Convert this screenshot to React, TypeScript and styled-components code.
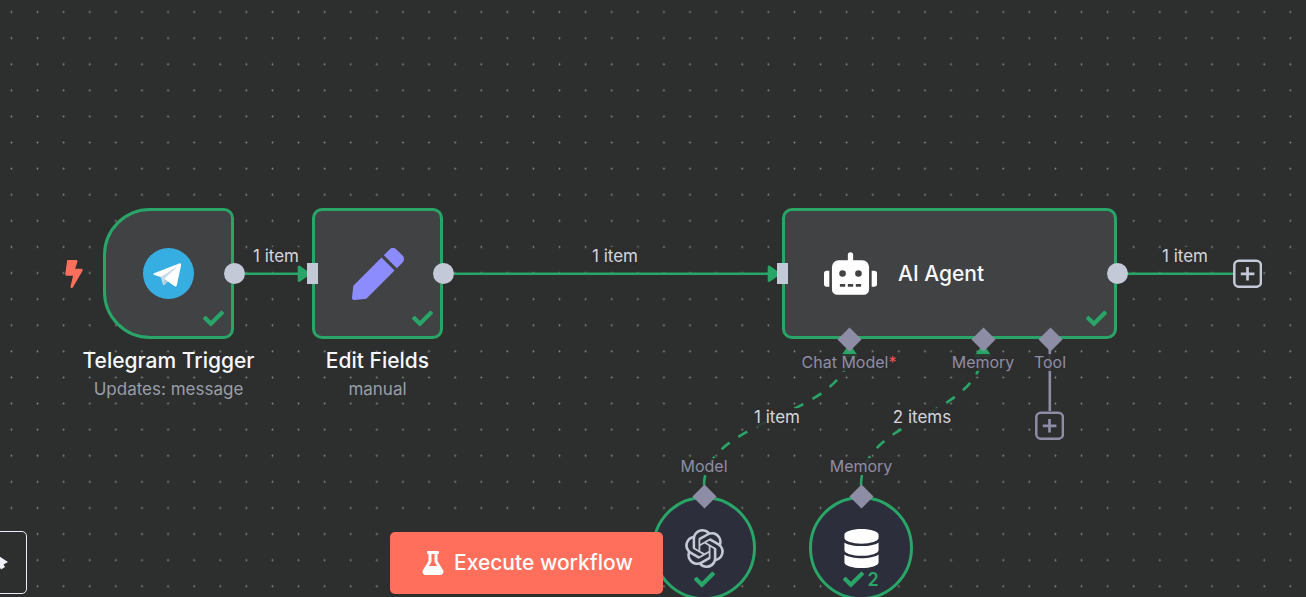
import React from "react";
import styled, { createGlobalStyle, css } from "styled-components";
import { FaBolt, FaCheck, FaDatabase, FaFlask, FaPen, FaRobot } from "react-icons/fa";
import { SiOpenai } from "react-icons/si";

const color = {
  canvas: "#2d2e2e",
  dot: "#8f9090",
  node: "#414244",
  subNode: "#2d2e3c",
  success: "#29a568",
  handle: "#c3c9d6",
  port: "#8d8da6",
  text: "#f7f8fb",
  textSoft: "#d3d6de",
  textDim: "#9a9ea8",
  primary: "#ff6f5c",
};

const GlobalStyle = createGlobalStyle`
  * { box-sizing: border-box; }
  body {
    margin: 0;
    background: ${color.canvas};
    font-family: Inter, "Liberation Sans", sans-serif;
  }
  button { font: inherit; }
`;

type Place = { $x: number; $y: number };

const at = css<Place>`
  position: absolute;
  left: ${(p) => p.$x}px;
  top: ${(p) => p.$y}px;
`;

const Canvas = styled.main`
  position: relative;
  height: 100vh;
  overflow: hidden;
`;

const Drawing = styled.svg`
  position: absolute;
  inset: 0;
  width: 100%;
  height: 100%;
`;

const Node = styled.article<Place & { $width: number }>`
  ${at}
  width: ${(p) => p.$width}px;
  display: flex;
  flex-direction: column;
  align-items: center;
`;

const Box = styled.div<{ $shape?: "trigger" | "circle" | "wide" }>`
  position: relative;
  width: 100%;
  height: ${(p) => (p.$shape === "circle" ? 104 : 131)}px;
  display: flex;
  align-items: center;
  justify-content: ${(p) => (p.$shape === "wide" ? "flex-start" : "center")};
  gap: 21px;
  padding: 0 ${(p) => (p.$shape === "wide" ? 39 : 0)}px;
  border: 3px solid ${color.success};
  border-radius: ${(p) =>
    p.$shape === "circle" ? "50%" : p.$shape === "trigger" ? "47px 10px 10px 47px" : "10px"};
  background: ${(p) => (p.$shape === "circle" ? color.subNode : color.node)};
`;

const Title = styled.h2`
  margin: 0;
  font-size: 21px;
  line-height: 26px;
  font-weight: 500;
  color: ${color.text};
  white-space: nowrap;
`;

const Caption = styled.div`
  margin-top: 9px;
  text-align: center;
  white-space: nowrap;
`;

const Subtitle = styled.p`
  margin: 4px 0 0;
  font-size: 17px;
  line-height: 22px;
  color: ${color.textDim};
`;

const Status = styled.div<{ $centered?: boolean }>`
  position: absolute;
  display: flex;
  align-items: center;
  gap: 3px;
  color: ${color.success};
  font-size: 18px;
  line-height: 20px;
  font-weight: 600;
  ${(p) =>
    p.$centered
      ? css`left: 0; right: 0; bottom: 7px; justify-content: center;`
      : css`right: 7px; bottom: 7px;`}
`;

const TriggerMark = styled.div`
  position: absolute;
  right: 100%;
  margin-right: 18px;
  display: flex;
  color: ${color.primary};
`;

const InputHandle = styled.span`
  position: absolute;
  left: -8px;
  width: 11px;
  height: 21px;
  background: ${color.handle};
`;

const OutputHandle = styled.span`
  position: absolute;
  right: -14px;
  width: 21px;
  height: 21px;
  border-radius: 50%;
  background: ${color.handle};
`;

const Port = styled.div<Place>`
  ${at}
  width: 0;
  display: flex;
  flex-direction: column;
  align-items: center;
`;

const Diamond = styled.span`
  width: 17px;
  height: 17px;
  margin: -8px 0;
  transform: rotate(45deg);
  background: ${color.port};
`;

const PortLabel = styled.span<{ $above?: boolean }>`
  ${(p) =>
    p.$above
      ? css`order: -1; margin: -38px 0 21px;`
      : css`margin-top: 14px;`}
  height: 17px;
  font-size: 16px;
  line-height: 17px;
  color: ${color.port};
  background: rgba(45, 46, 46, 0.88);
  white-space: nowrap;
`;

const Required = styled.span`
  color: #ff4f55;
`;

const EdgeLabel = styled.div<Place>`
  ${at}
  width: 0;
  display: flex;
  justify-content: center;
  font-size: 17px;
  line-height: 19px;
  color: ${color.textSoft};
  white-space: nowrap;

  span {
    background: rgba(45, 46, 46, 0.88);
  }
`;

const AddButton = styled.button<Place & { $tone: string }>`
  ${at}
  width: 29px;
  height: 29px;
  padding: 0;
  display: flex;
  align-items: center;
  justify-content: center;
  border: 0;
  background: ${color.canvas};
  color: ${(p) => p.$tone};
`;

const ExecuteButton = styled.button`
  position: absolute;
  left: 390px;
  bottom: 3px;
  display: flex;
  align-items: center;
  gap: 9px;
  height: 62px;
  padding: 0 30px 1px 31px;
  border: 0;
  border-radius: 5px;
  background: ${color.primary};
  color: #fff;
  font-size: 21px;
  font-weight: 500;
  white-space: nowrap;
`;

const PointerTool = styled.button`
  position: absolute;
  left: -36px;
  bottom: 3px;
  width: 63px;
  height: 63px;
  padding: 0 18px 0 0;
  display: flex;
  align-items: center;
  justify-content: flex-end;
  border: 1px solid #eceef8;
  border-radius: 5px;
  background: ${color.canvas};
`;

const TelegramLogo = () => (
  <svg width="51" height="51" viewBox="0 0 240 240" aria-hidden="true">
    <circle cx="120" cy="120" r="120" fill="#37aee2" />
    <path fill="#c8daea" d="M98 175c-3.888 0-3.227-1.468-4.568-5.17L82 132.207 170 80" />
    <path fill="#a9c9dd" d="M98 175c3 0 4.325-1.372 6-3l16-15.558-19.958-12.035" />
    <path
      fill="#fff"
      d="M100.04 144.41l48.36 35.729c5.519 3.045 9.501 1.468 10.876-5.123l19.685-92.763c2.015-8.08-3.08-11.746-8.36-9.349l-115.59 44.571c-7.89 3.165-7.843 7.567-1.438 9.528l29.663 9.259 68.673-43.325c3.242-1.966 6.218-.91 3.776 1.258"
    />
  </svg>
);

const PlusBox = () => (
  <svg width="29" height="29" viewBox="0 0 29 29" fill="none" stroke="currentColor" aria-hidden="true">
    <rect x="1.3" y="1.8" width="26.6" height="26" rx="4.5" strokeWidth="2.5" />
    <path d="M14.5 8v13.6M7.8 14.8h13.6" strokeWidth="2.7" />
  </svg>
);

const Arrow = ({ x, y, up }: { x: number; y: number; up?: boolean }) => (
  <path
    d="M-10 -7L0 0L-10 7Z"
    transform={`translate(${x} ${y})${up ? " rotate(-90)" : ""}`}
    fill={color.success}
    stroke={color.success}
    strokeWidth="2.6"
    strokeLinejoin="round"
  />
);

const Edges = () => (
  <Drawing aria-hidden="true">
    <defs>
      <pattern id="dots" x="-1.6" y="-1" width="26.1" height="26.1" patternUnits="userSpaceOnUse">
        <circle cx="13.05" cy="13.05" r="0.85" fill={color.dot} />
      </pattern>
    </defs>
    <rect width="100%" height="100%" fill="url(#dots)" />
    <g fill="none" stroke={color.success} strokeWidth="2.6">
      <path d="M234 273.7H300" />
      <path d="M443 273.7H770" />
      <path d="M1117 273.7H1233" />
      <path strokeDasharray="10.4 10.4" d="M704 485.5C704 417 849.5 417 849.5 349" />
      <path strokeDasharray="10.4 10.4" d="M861 485.5C861 417 983 417 983 349" />
    </g>
    <path d="M1049.8 339V411" stroke={color.port} strokeWidth="2.6" />
    <Arrow x={309} y={273.7} />
    <Arrow x={779} y={273.7} />
    <Arrow x={849.5} y={346} up />
    <Arrow x={983} y={346} up />
  </Drawing>
);

const Done = ({ count, centered }: { count?: number; centered?: boolean }) => (
  <Status $centered={centered}>
    <FaCheck size={21} />
    {count}
  </Status>
);

const EDGE_LABELS = [
  { x: 276, y: 247, text: "1 item" },
  { x: 615, y: 247, text: "1 item" },
  { x: 1185, y: 247, text: "1 item" },
  { x: 777, y: 408, text: "1 item" },
  { x: 922, y: 408, text: "2 items" },
];

export default function App() {
  return (
    <>
      <GlobalStyle />
      <Canvas>
        <Edges />

        <Node $x={103} $y={208} $width={131}>
          <Box $shape="trigger">
            <TriggerMark>
              <FaBolt size={28} />
            </TriggerMark>
            <TelegramLogo />
            <OutputHandle />
            <Done />
          </Box>
          <Caption>
            <Title>Telegram Trigger</Title>
            <Subtitle>Updates: message</Subtitle>
          </Caption>
        </Node>

        <Node $x={312} $y={208} $width={131}>
          <Box>
            <InputHandle />
            <FaPen size={52} color="#8c8cff" />
            <OutputHandle />
            <Done />
          </Box>
          <Caption>
            <Title>Edit Fields</Title>
            <Subtitle>manual</Subtitle>
          </Caption>
        </Node>

        <Node $x={782} $y={208} $width={335}>
          <Box $shape="wide">
            <InputHandle />
            <FaRobot size={53} color="#fff" />
            <Title>AI Agent</Title>
            <OutputHandle />
            <Done />
          </Box>
          <Port $x={67} $y={131}>
            <Diamond />
            <PortLabel>
              Chat Model<Required>*</Required>
            </PortLabel>
          </Port>
          <Port $x={201} $y={131}>
            <Diamond />
            <PortLabel>Memory</PortLabel>
          </Port>
          <Port $x={268} $y={131}>
            <Diamond />
            <PortLabel>Tool</PortLabel>
          </Port>
        </Node>

        <Node $x={652} $y={496} $width={104}>
          <Box $shape="circle">
            <SiOpenai size={39} color={color.handle} />
            <Done centered />
          </Box>
          <Port $x={52} $y={0}>
            <Diamond />
            <PortLabel $above>Model</PortLabel>
          </Port>
        </Node>

        <Node $x={809} $y={496} $width={104}>
          <Box $shape="circle">
            <FaDatabase size={39} color="#fff" />
            <Done centered count={2} />
          </Box>
          <Port $x={52} $y={0}>
            <Diamond />
            <PortLabel $above>Memory</PortLabel>
          </Port>
        </Node>

        {EDGE_LABELS.map((label) => (
          <EdgeLabel key={`${label.x}-${label.y}`} $x={label.x} $y={label.y}>
            <span>{label.text}</span>
          </EdgeLabel>
        ))}

        <AddButton $x={1233} $y={259} $tone={color.handle} aria-label="Add node">
          <PlusBox />
        </AddButton>
        <AddButton $x={1035} $y={411} $tone={color.port} aria-label="Add tool">
          <PlusBox />
        </AddButton>

        <PointerTool aria-label="Pointer">
          <svg width="20" height="26" viewBox="0 0 20 26" fill="#f0f1fa" aria-hidden="true">
            <path d="M2 0L20 12L15.5 14.5L17 17L13 19.5L11 16L4 22Z" />
          </svg>
        </PointerTool>
        <ExecuteButton>
          <FaFlask size={24} />
          Execute workflow
        </ExecuteButton>
      </Canvas>
    </>
  );
}
